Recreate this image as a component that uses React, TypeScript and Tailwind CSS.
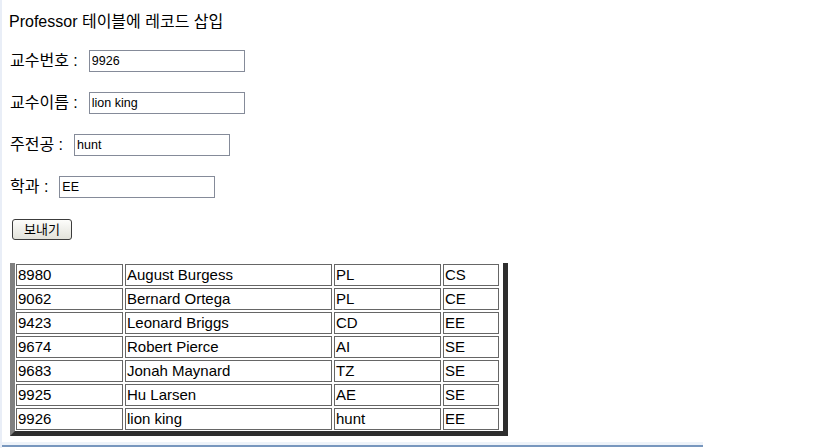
import * as React from "react";

const rows = [
  ["8980", "August Burgess", "PL", "CS"],
  ["9062", "Bernard Ortega", "PL", "CE"],
  ["9423", "Leonard Briggs", "CD", "EE"],
  ["9674", "Robert Pierce", "AI", "SE"],
  ["9683", "Jonah Maynard", "TZ", "SE"],
  ["9925", "Hu Larsen", "AE", "SE"],
  ["9926", "lion king", "hunt", "EE"],
];

const fields = [
  { label: "교수번호", value: "9926" },
  { label: "교수이름", value: "lion king" },
  { label: "주전공", value: "hunt" },
  { label: "학과", value: "EE" },
];

export default function App() {
  return (
    <div className="w-[825px] h-[448px] overflow-hidden bg-white border-l-2 border-[#e9eef7] flex flex-col font-['Liberation_Sans','Noto_Sans_CJK_KR',sans-serif] text-black">
      <div className="pl-[7px] mt-[12px] text-[16px] leading-[20px]">Professor 테이블에 레코드 삽입</div>

      <form className="pl-[8px] flex flex-col" onSubmit={(e) => e.preventDefault()}>
        {fields.map((f, i) => (
          <div key={f.label} className={`flex items-center h-[22px] ${i === 0 ? "mt-[18px]" : "mt-[20px]"}`}>
            <span className="text-[16px] leading-[22px] whitespace-pre">{f.label} :</span>
            <input
              type="text"
              defaultValue={f.value}
              className="ml-[11px] w-[156px] h-[22px] border border-[#858b99] px-[2px] text-[12.5px] text-black outline-none"
            />
          </div>
        ))}

        <div className="mt-[21px] flex">
          <button
            type="submit"
            className="ml-[2px] w-[60px] h-[21px] rounded-[3px] border border-[#3c3c3c] bg-gradient-to-b from-[#fdfdfb] to-[#e2e2da] text-[13px] leading-[19px]"
          >
            보내기
          </button>
        </div>
      </form>

      <div className="ml-[8px] mt-[23px] self-start border-l-[5px] border-r-[5px] border-b-[5px] border-[#2e2e2e] border-l-[#808080] pl-[1px] pt-[1px] pr-[4px] pb-[1px]">
        <div className="grid grid-cols-[107px_207px_107px_56px] gap-[2px]">
          {rows.map((r) =>
            r.map((c, j) => (
              <div key={r[0] + j} className="h-[22px] border border-[#666] pl-[1px] text-[15px] leading-[20px] whitespace-nowrap overflow-hidden">
                {c}
              </div>
            ))
          )}
        </div>
      </div>

      <div className="mt-[6px] h-[3px] w-[701px] bg-[#eef3f9]" />
      <div className="h-[2px] w-[701px] bg-[#7897be]" />
    </div>
  );
}
